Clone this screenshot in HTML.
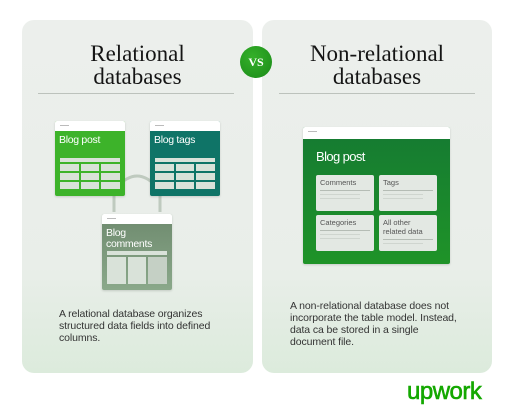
<!DOCTYPE html>
<html><head><style>
*{margin:0;padding:0;box-sizing:border-box}
body{width:512px;height:418px;background:#fff;position:relative;overflow:hidden;font-family:"Liberation Sans",sans-serif}
.p{position:absolute;top:20px;height:353px;border-radius:12px;background:linear-gradient(180deg,#ecefec 0%,#e9eee9 70%,#dcebdc 100%)}
.t{position:absolute;width:100%;text-align:center;top:22px;font-family:"Liberation Serif",serif;font-size:23px;line-height:23px;color:#151515}
.hr{position:absolute;top:73px;height:1px;background:#bcc2bc}
.card{position:absolute;border-radius:2px;overflow:hidden;box-shadow:0 1px 2px rgba(0,0,0,.15)}
.hd{height:10px;background:#fff;position:relative}
.hd:after{content:"";position:absolute;left:5px;top:4px;width:9px;height:1px;background:#bbb}
.ct{color:#fff;font-size:10.5px;padding:4px 4px 0;line-height:10.5px;letter-spacing:-.3px}
.g{position:absolute;display:grid;gap:2px}
.g div{background:#d9e2d9}
.txt{position:absolute;font-size:10.5px;line-height:12px;color:#333;letter-spacing:-.1px}
.sub{position:absolute;background:#e3e8e3;border-radius:2px;font-size:7.5px;color:#555;padding:3px 4px;line-height:9px}
.sub i{display:block;height:1px;background:#b5bcb5;margin-top:3px}
.sub b{display:block;height:1px;background:#cfd5cf;margin-top:3px;width:80%}
</style></head><body>
<div class="p" style="left:22px;width:231px">
<div class="t">Relational<br>databases</div>
<div class="hr" style="left:16px;width:196px"></div>
</div>
<div class="p" style="left:262px;width:230px">
<div class="t">Non-relational<br>databases</div>
<div class="hr" style="left:17px;width:196px"></div>
</div>
<div style="position:absolute;left:240px;top:46px;width:32px;height:32px;border-radius:50%;background:radial-gradient(circle at 40% 35%,#35b02a,#1a8a18);color:#fff;font-family:'Liberation Serif',serif;font-weight:bold;font-size:12px;line-height:32px;text-align:center">VS</div>

<svg style="position:absolute;left:0;top:0" width="512" height="418">
<path d="M114 196 V212 M160 196 V212 M118 186 Q137 166 156 186" stroke="#bfcabf" stroke-width="3" fill="none"/>
</svg>

<div class="card" style="left:55px;top:121px;width:70px;height:75px;background:#3db32a">
<div class="hd"></div><div class="ct">Blog post</div>
<div class="g" style="left:5px;top:37px;width:60px;grid-template-columns:1fr;"><div style="height:4px"></div></div>
<div class="g" style="left:5px;top:43px;width:60px;grid-template-columns:1fr 1fr 1fr"><div style="height:7px"></div><div></div><div></div><div style="height:7px"></div><div></div><div></div><div style="height:7px"></div><div></div><div></div></div>
</div>
<div class="card" style="left:150px;top:121px;width:70px;height:75px;background:#0f7467">
<div class="hd"></div><div class="ct">Blog tags</div>
<div class="g" style="left:5px;top:37px;width:60px;grid-template-columns:1fr;"><div style="height:4px"></div></div>
<div class="g" style="left:5px;top:43px;width:60px;grid-template-columns:1fr 1fr 1fr"><div style="height:7px"></div><div></div><div></div><div style="height:7px"></div><div></div><div></div><div style="height:7px"></div><div></div><div></div></div>
</div>
<div class="card" style="left:102px;top:214px;width:70px;height:76px;background:linear-gradient(#6e8a6e,#8aa88a)">
<div class="hd"></div><div class="ct">Blog<br>comments</div>
<div class="g" style="left:5px;top:37px;width:60px;grid-template-columns:1fr;"><div style="height:4px"></div></div>
<div class="g" style="left:5px;top:43px;width:60px;grid-template-columns:1fr 1fr 1fr"><div style="height:27px"></div><div></div><div style="background:#c5d0c5"></div></div>
</div>

<div class="card" style="left:303px;top:127px;width:147px;height:137px;background:linear-gradient(#157a32,#1f9328)">
<div class="hd" style="height:12px"></div>
<div style="color:#fff;font-size:13px;padding:10px 0 0 13px;letter-spacing:-.6px">Blog post</div>
<div class="sub" style="left:13px;top:48px;width:58px;height:36px">Comments<i></i><b></b><b></b></div>
<div class="sub" style="left:76px;top:48px;width:58px;height:36px">Tags<i></i><b></b><b></b></div>
<div class="sub" style="left:13px;top:88px;width:58px;height:36px">Categories<i></i><b></b><b></b></div>
<div class="sub" style="left:76px;top:88px;width:58px;height:36px">All other<br>related data<i></i><b></b></div>
</div>

<div class="txt" style="left:59px;top:308px">A relational database organizes<br>structured data fields into defined<br>columns.</div>
<div class="txt" style="left:290px;top:300px">A non-relational database does not<br>incorporate the table model. Instead,<br>data ca be stored in a single<br>document file.</div>
<div style="position:absolute;left:407px;top:380px;font-size:24px;color:#14a800;letter-spacing:-0.5px;line-height:24px;-webkit-text-stroke:0.6px #14a800">upwork</div>
</body></html>
